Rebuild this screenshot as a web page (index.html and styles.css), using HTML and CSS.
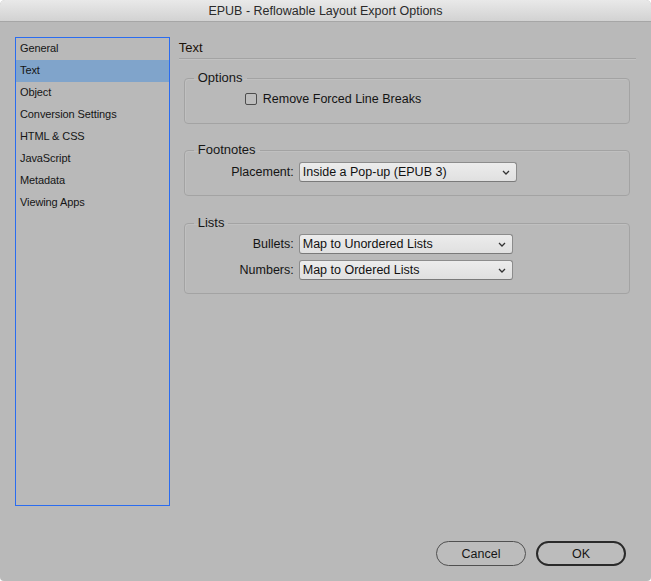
FILE: index.html
```html
<!DOCTYPE html>
<html>
<head>
<meta charset="utf-8">
<link rel="stylesheet" href="styles.css">
</head>
<body>
<div class="window">
  <div class="titlebar">EPUB - Reflowable Layout Export Options</div>
  <div class="main">
    <ul class="nav">
      <li>General</li>
      <li class="active">Text</li>
      <li>Object</li>
      <li>Conversion Settings</li>
      <li>HTML &amp; CSS</li>
      <li>JavaScript</li>
      <li>Metadata</li>
      <li>Viewing Apps</li>
    </ul>
    <div class="panel">
      <div class="panel-title">Text</div>
      <fieldset class="group g-options">
        <legend>Options</legend>
        <div class="check-row">
          <span class="checkbox"></span>
          <span>Remove Forced Line Breaks</span>
        </div>
      </fieldset>
      <fieldset class="group g-foot">
        <legend>Footnotes</legend>
        <div class="row">
          <span class="label">Placement:</span>
          <div class="select w218"><span>Inside a Pop-up (EPUB 3)</span><svg class="chev" width="8" height="5" viewBox="0 0 8 5"><path d="M1 1 L4 4 L7 1" fill="none" stroke="#333" stroke-width="1.3"/></svg></div>
        </div>
      </fieldset>
      <fieldset class="group g-lists">
        <legend>Lists</legend>
        <div class="row">
          <span class="label">Bullets:</span>
          <div class="select w214"><span>Map to Unordered Lists</span><svg class="chev" width="8" height="5" viewBox="0 0 8 5"><path d="M1 1 L4 4 L7 1" fill="none" stroke="#333" stroke-width="1.3"/></svg></div>
        </div>
        <div class="row row2">
          <span class="label">Numbers:</span>
          <div class="select w214"><span>Map to Ordered Lists</span><svg class="chev" width="8" height="5" viewBox="0 0 8 5"><path d="M1 1 L4 4 L7 1" fill="none" stroke="#333" stroke-width="1.3"/></svg></div>
        </div>
      </fieldset>
    </div>
  </div>
  <div class="footer">
    <button class="btn">Cancel</button>
    <button class="btn btn-ok">OK</button>
  </div>
</div>
</body>
</html>
```

FILE: styles.css
```css
* { box-sizing: border-box; }
html, body {
  margin: 0;
  padding: 0;
  background: #ffffff;
}
body {
  width: 651px;
  height: 581px;
  font-family: "Liberation Sans", Arial, sans-serif;
  color: #141414;
}
.window {
  width: 651px;
  height: 581px;
  background: #b9b9b9;
  border-radius: 5px 5px 4px 4px;
  overflow: hidden;
  display: flex;
  flex-direction: column;
}
.titlebar {
  height: 22px;
  line-height: 22px;
  text-align: center;
  font-size: 12.5px;
  color: #2a2a2a;
  background: linear-gradient(#e9e9e9, #d2d2d2);
  border-bottom: 1px solid #a6a6a6;
  flex: none;
}
.main {
  display: flex;
  padding: 15px 15px 0 15px;
  gap: 9px;
  flex: none;
}
.nav {
  list-style: none;
  margin: 0;
  padding: 0;
  width: 155px;
  height: 469px;
  border: 1px solid #2a6cf0;
  font-size: 11px;
  letter-spacing: -0.1px;
  color: #151515;
}
.nav li {
  height: 22px;
  line-height: 21px;
  padding-left: 4px;
}
.nav li.active {
  background: #80a4cb;
}
.panel {
  width: 458px;
  display: flex;
  flex-direction: column;
}
.panel-title {
  height: 22px;
  line-height: 21px;
  font-size: 13px;
  color: #1c1208;
  border-bottom: 1px solid #a3a3a3;
  box-shadow: 0 1px 0 #c2c2c2;
}
.group {
  margin: 0 6px 0 5px;
  padding: 0;
  border: 1px solid #a3a3a3;
  border-radius: 4px;
  box-shadow: inset 1px 1px 0 #c0c0c0;
  min-width: 0;
}
.group legend {
  margin-left: 9px;
  padding: 0 4px;
  font-size: 13px;
  line-height: 14px;
  color: #161616;
}
.g-options { margin-top: 12px; padding: 4px 0 14px 0; }
.g-foot { margin-top: 19px; padding: 5px 0 13px 0; }
.g-lists { margin-top: 20px; padding: 4px 0 13px 0; }
.check-row {
  display: flex;
  align-items: center;
  height: 20px;
  padding-left: 60px;
  gap: 6px;
  font-size: 12.5px;
}
.checkbox {
  width: 12px;
  height: 12px;
  border: 1px solid #4d4d4d;
  border-radius: 2px;
  background: #bdbdbd;
}
.row {
  display: flex;
  align-items: center;
  height: 20px;
  font-size: 12.5px;
}
.row2 { margin-top: 6px; }
.label {
  width: 109px;
  text-align: right;
  margin-right: 5px;
}
.select {
  height: 20px;
  display: flex;
  align-items: center;
  justify-content: space-between;
  padding: 0 6px 0 3px;
  background: linear-gradient(#ececec, #e0e0e0);
  border: 1px solid #8c8c8c;
  border-bottom-color: #7a7a7a;
  border-radius: 3px;
  color: #111;
}
.w218 { width: 218px; }
.w214 { width: 214px; }
.chev { flex: none; }
.footer {
  display: flex;
  justify-content: flex-end;
  gap: 10px;
  padding: 35px 25px 0 0;
}
.btn {
  width: 90px;
  height: 25px;
  border-radius: 13px;
  border: 1px solid #505050;
  background: #bcbcbc;
  font-family: "Liberation Sans", Arial, sans-serif;
  font-size: 12.5px;
  color: #161616;
  padding: 0;
}
.btn-ok {
  border: 2px solid #2a2a2a;
}
```
